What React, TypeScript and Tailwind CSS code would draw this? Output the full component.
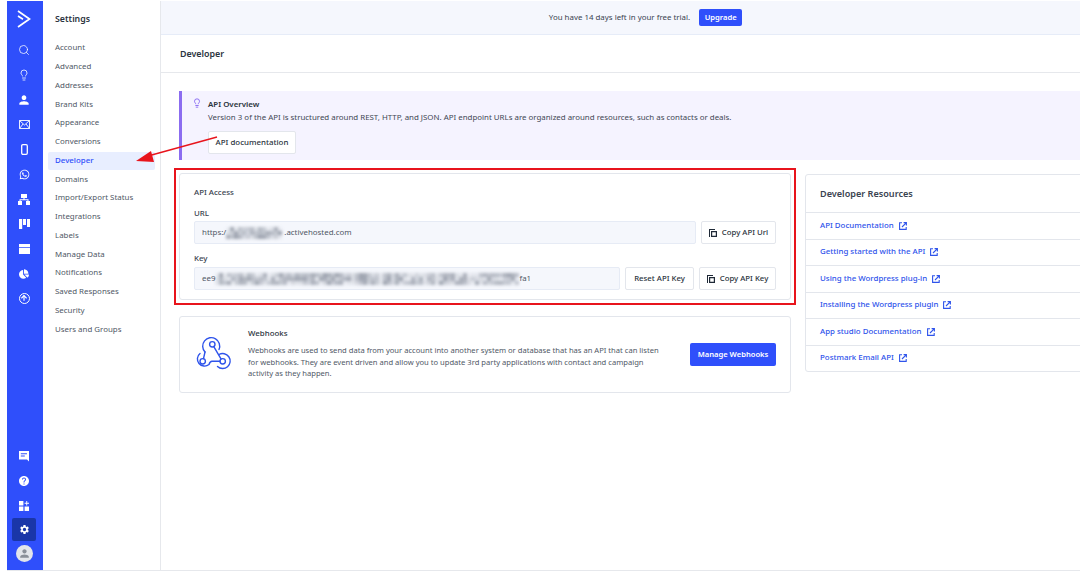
import React from 'react'
import { FaWhatsapp, FaChartPie } from 'react-icons/fa'
import { MdPerson, MdHelp, MdSettings } from 'react-icons/md'
import { Search, Lightbulb, ArrowUp } from 'lucide-react'

const navItems = [
  'Account',
  'Advanced',
  'Addresses',
  'Brand Kits',
  'Appearance',
  'Conversions',
  'Developer',
  'Domains',
  'Import/Export Status',
  'Integrations',
  'Labels',
  'Manage Data',
  'Notifications',
  'Saved Responses',
  'Security',
  'Users and Groups'
]

const resources = [
  'API Documentation',
  'Getting started with the API',
  'Using the Wordpress plug-in',
  'Installing the Wordpress plugin',
  'App studio Documentation',
  'Postmark Email API'
]

const ExternalIcon = () => (
  <svg width="8" height="8" viewBox="0 0 8 8" fill="none" stroke="#2f54eb" strokeWidth="1.100">
    <path d="M3 .8H.6v6.600H7.200V5" />
    <path d="M3 5l4.200-4.200M4.600.6h2.800v2.800" />
  </svg>
)

const CopyIcon = () => (
  <svg width="8" height="8" viewBox="0 0 8 8" fill="#1f2937">
    <path d="M0 0h6v1H1v7H0z" />
    <path d="M2 2h6v6H2zm1.200 1.200v3.600h3.600V3.200z" fillRule="evenodd" />
  </svg>
)

const MailIcon = () => (
  <svg width="11" height="9" viewBox="0 0 11 9" fill="none" stroke="white" strokeWidth="0.900">
    <path d="M.5.500h10v8H.5z" />
    <path d="M.5.500l5 4.500 5-4.500M.5 8.500l3.500-4.500M10.500 8.500L7 4" />
  </svg>
)

const PhoneIcon = () => (
  <svg width="7" height="11" viewBox="0 0 7 11" fill="none" stroke="white" strokeWidth="1.300">
    <rect x=".7" y=".7" width="5.600" height="9.600" rx="1.200" />
  </svg>
)

const OrgIcon = () => (
  <svg width="12" height="11" viewBox="0 0 12 11" fill="white">
    <path d="M3 0h6v4H6.500v1.200H10.500V7H12v4H8V7h1.500V6.200h-7V7H4v4H0V7h1.500V5.200h4V4H3z" />
  </svg>
)

const KanbanIcon = () => (
  <svg width="11" height="10" viewBox="0 0 11 10" fill="white">
    <path d="M0 0h3.200v10H0zM4 0h3v6H4zM8 0h3v8H8z" />
  </svg>
)

const WindowIcon = () => (
  <svg width="11" height="10" viewBox="0 0 11 10" fill="white">
    <path d="M0 0h11v3.200H0zM0 4h11v6H0z" />
  </svg>
)

const UploadCircleIcon = () => (
  <span className="flex h-[11px] w-[11px] items-center justify-center rounded-full border border-white">
    <ArrowUp size={8} strokeWidth={3.5} color="white" />
  </span>
)

const ChatIcon = () => (
  <svg width="10" height="11" viewBox="0 0 10 11" fill="white">
    <path d="M0 0h10v10.500L8 8.600H0zM1.800 2.200v1h6.200v-1zM1.800 4.600v1h4v-1z" fillRule="evenodd" />
  </svg>
)

const AppsPlusIcon = () => (
  <svg width="10" height="10" viewBox="0 0 10 10" fill="white">
    <path d="M0 0h4.400v4.400H0zM0 5.600h4.400V10H0zM5.600 5.600H10V10H5.600z" />
    <path d="M7.300 0h.9v1.800H10v.9H8.200v1.700h-.9V2.700H5.600v-.9h1.700z" />
  </svg>
)

const WebhookIcon = () => (
  <svg width="40" height="40" viewBox="0 0 40 40" fill="none" stroke="#2f54eb" strokeWidth="1.400" strokeLinecap="round" className="shrink-0">
    <circle cx="19.300" cy="9.300" r="2.700" />
    <circle cx="9.700" cy="26.300" r="2.700" />
    <circle cx="29.700" cy="26.300" r="2.700" />
    <path d="M12 17A8.500 8.500 0 1 1 26 14.500" />
    <path d="M12 17L10.500 23.600" />
    <path d="M20.800 11.600L28 23.800" />
    <path d="M7 18.500A7 7 0 1 0 16 29.500Q17 26.300 19 26.300H27" />
    <path d="M26 19.500A7.500 7.500 0 1 1 24.500 31.500" />
  </svg>
)

// Mosaico borroso que tapa los datos sensibles de la captura
const Censored = ({ width }: { width: number }) => {
  const cells = Array.from({ length: Math.ceil(width / 4) * 3 }, (_, i) => {
    const noise = Math.abs(Math.sin(i * 12.9898) * 43758.5453) % 1
    return 0.08 + noise * 0.55
  })
  return (
    <span className="inline-flex h-[12px] flex-wrap overflow-hidden blur-[1.5px]" style={{ width }}>
      {cells.map((opacity, i) => (
        <span key={i} className="h-[4px] w-[4px] bg-gray-500" style={{ opacity }} />
      ))}
    </span>
  )
}

const SideIcon = ({ children }: { children: React.ReactNode }) => (
  <div className="flex h-[24.8px] w-full items-center justify-center">{children}</div>
)

const OutlineButton = ({ children, className }: { children: React.ReactNode; className: string }) => (
  <button className={`flex h-[23px] shrink-0 items-center justify-center gap-[5px] rounded-[2px] border border-[#e3e6ec] bg-white text-[7.8px] font-medium text-[#2b3440] ${className}`}>
    {children}
  </button>
)

const App = () => {
  return (
    <div className="h-[586px] w-[1080px] overflow-hidden bg-white pl-[7px] pt-px font-['Noto_Sans',sans-serif] text-[7.9px] text-[#4f5866]">
      <div className="relative flex h-[570px] border-b border-[#e6e8ec]">
        {/* Barra de iconos */}
        <aside className="flex w-[36px] shrink-0 flex-col items-center bg-[#2f4ffb] pr-[2px]">
          <svg className="mt-[9px]" width="14" height="18" viewBox="0 0 14 18" fill="none" stroke="white" strokeWidth="1.700">
            <path d="M1 1l11.500 8L1 17" />
            <path d="M1 6l5 3.200" />
          </svg>
          <div className="mt-[10px] flex w-full flex-col">
            <SideIcon><Search size={12} color="white" strokeWidth={1.5} /></SideIcon>
            <SideIcon><Lightbulb size={12} color="white" strokeWidth={1.6} /></SideIcon>
            <SideIcon><MdPerson size={14} color="white" /></SideIcon>
            <SideIcon><MailIcon /></SideIcon>
            <SideIcon><PhoneIcon /></SideIcon>
            <SideIcon><FaWhatsapp size={11} color="white" /></SideIcon>
            <SideIcon><OrgIcon /></SideIcon>
            <SideIcon><KanbanIcon /></SideIcon>
            <SideIcon><WindowIcon /></SideIcon>
            <SideIcon><FaChartPie size={10} color="white" /></SideIcon>
            <SideIcon><UploadCircleIcon /></SideIcon>
          </div>
          <div className="mt-auto flex w-full flex-col items-center pb-[8px]">
            <SideIcon><ChatIcon /></SideIcon>
            <SideIcon><MdHelp size={12} color="white" /></SideIcon>
            <SideIcon><AppsPlusIcon /></SideIcon>
            <div className="flex h-[23px] w-[24px] items-center justify-center rounded-[2px] bg-[#1a36a8]">
              <MdSettings size={11} color="white" />
            </div>
            <div className="mt-[4px] flex h-[17px] w-[17px] items-center justify-center overflow-hidden rounded-full bg-[#e3e5ea]">
              <MdPerson size={13} color="#8a8f98" />
            </div>
          </div>
        </aside>

        {/* Menú de ajustes */}
        <nav className="w-[118px] shrink-0 border-r border-[#e6e8ec] pl-[5px] pr-[5px]">
          <div className="pl-[7px] pt-[12px] text-[8.8px] font-semibold leading-[12px] text-[#2b3440]">Settings</div>
          <ul className="mt-[14px]">
            {navItems.map((item) => (
              <li
                key={item}
                className={
                  item === 'Developer'
                    ? 'flex h-[18.75px] items-center rounded-[2px] bg-[#e8eeff] pl-[7px] font-medium text-[#2f4ffb]'
                    : 'flex h-[18.75px] items-center pl-[7px]'
                }
              >
                {item}
              </li>
            ))}
          </ul>
        </nav>

        <main className="flex min-w-0 flex-1 flex-col">
          <div className="flex h-[34px] shrink-0 items-center justify-center gap-[9px] border-b border-[#e6ecf8] bg-[#f5f7fd] pl-[50px] text-[#3a4350]">
            <span>You have 14 days left in your free trial.</span>
            <button className="h-[17px] w-[43px] rounded-[2px] bg-[#2f4ffb] text-[7.6px] font-semibold text-white">Upgrade</button>
          </div>
          <div className="flex h-[38px] shrink-0 items-center border-b border-[#e6e8ec] pl-[19px] text-[8.9px] font-semibold text-[#2b3440]">
            Developer
          </div>

          <div className="pl-[18px] pt-[18px]">
            <section className="flex h-[69px] border-l-[3px] border-[#8b6cf0] bg-[#f5f3ff] pl-[10px] pt-[7px]">
              <Lightbulb size={10} color="#7c5cf0" strokeWidth={2} className="shrink-0" />
              <div className="ml-[6px]">
                <div className="font-semibold leading-[12px] text-[#2b3440]">API Overview</div>
                <p className="mt-px leading-[13px] text-[#3f4754]">
                  Version 3 of the API is structured around REST, HTTP, and JSON. API endpoint URLs are organized around resources, such as contacts or deals.
                </p>
                <button className="mt-[7px] h-[23px] w-[88px] rounded-[2px] border border-[#e3e6ec] bg-white text-[7.9px] font-medium text-[#2b3440]">
                  API documentation
                </button>
              </div>
            </section>

            <div className="-ml-[5px] mt-[8px] flex items-start">
              <div className="w-[622px] shrink-0">
                <div className="border-2 border-[#e8141c] p-[3px]">
                  <section className="h-[127px] rounded-[3px] border border-[#e3e6ec] px-[14px] pt-[12px]">
                    <h3 className="font-medium leading-[12px] text-[#3a4350]">API Access</h3>
                    <div className="mt-[9px] font-medium leading-[12px] text-[#3a4350]">URL</div>
                    <div className="mt-[2px] flex gap-[5px]">
                      <div className="flex h-[23px] flex-1 items-center rounded-[2px] border border-[#e6ebf5] bg-[#f5f7fc] pl-[7px]">
                        https:/<Censored width={58} />.activehosted.com
                      </div>
                      <OutlineButton className="w-[75px]"><CopyIcon />Copy API Url</OutlineButton>
                    </div>
                    <div className="mt-[8px] font-medium leading-[12px] text-[#3a4350]">Key</div>
                    <div className="mt-[3px] flex gap-[5px]">
                      <div className="flex h-[23px] flex-1 items-center rounded-[2px] border border-[#e6ebf5] bg-[#f5f7fc] pl-[7px]">
                        ee9<Censored width={304} />fa1
                      </div>
                      <OutlineButton className="w-[69px]">Reset API Key</OutlineButton>
                      <OutlineButton className="w-[77px]"><CopyIcon />Copy API Key</OutlineButton>
                    </div>
                  </section>
                </div>
                <section className="ml-[5px] mt-[11px] flex h-[77px] w-[612px] items-center rounded-[3px] border border-[#e3e6ec] pl-[13px] pr-[14px]">
                  <WebhookIcon />
                  <div className="mb-[2px] ml-[15px] w-[416px]">
                    <h3 className="font-medium leading-[12px] text-[#2b3440]">Webhooks</h3>
                    <p className="mt-[6px] text-[7.6px] leading-[11.5px]">
                      Webhooks are used to send data from your account into another system or database that has an API that can listen for webhooks. They are event driven and allow you to update 3rd party applications with contact and campaign activity as they happen.
                    </p>
                  </div>
                  <button className="ml-auto h-[23px] w-[86px] rounded-[2px] bg-[#2f4ffb] text-[7.6px] font-semibold text-white">Manage Webhooks</button>
                </section>
              </div>

              <section className="ml-[9px] mt-[6px] w-[320px] shrink-0 rounded-[3px] border border-[#e3e6ec]">
                <h3 className="flex h-[37px] items-center pl-[14px] text-[9.1px] font-semibold text-[#3a4350]">Developer Resources</h3>
                {resources.map((item) => (
                  <a key={item} className="flex h-[26.5px] items-center gap-[5px] border-t border-[#e3e6ec] pl-[14px] font-medium text-[#2f54eb]">
                    {item}
                    <ExternalIcon />
                  </a>
                ))}
              </section>
            </div>
          </div>
        </main>

        {/* Flecha de anotación sobre la captura */}
        <svg className="pointer-events-none absolute left-[-7px] top-[-1px]" width="240" height="180" viewBox="0 0 240 180">
          <path d="M217 137L148 156" stroke="#e8141c" strokeWidth="1.300" />
          <path d="M136 161L151 151L154 162Z" fill="#e8141c" />
        </svg>
      </div>
    </div>
  )
}

export default App
